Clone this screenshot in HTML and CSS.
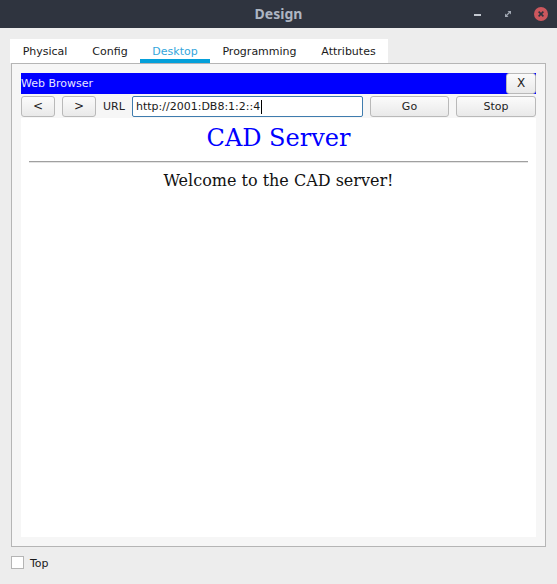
FILE: index.html
```html
<!DOCTYPE html>
<html>
<head>
<meta charset="utf-8">
<title>Design</title>
<link rel="stylesheet" href="styles.css">
</head>
<body>
<div class="window">
  <div class="titlebar">
    <div class="tb-left"></div>
    <div class="tb-title">Design</div>
    <div class="tb-controls">
      <span class="ctl-min"></span>
      <svg class="ctl-max" width="6" height="6" viewBox="0 0 6 6"><polygon points="2.5,0 6,0 6,3.5" fill="#a3aab5"/><polygon points="0,2.5 0,6 3.5,6" fill="#a3aab5"/><line x1="1" y1="5" x2="5" y2="1" stroke="#a3aab5" stroke-width="1.2"/></svg>
      <span class="ctl-close"><svg width="14" height="14" viewBox="0 0 14 14"><circle cx="7" cy="7" r="7" fill="#cc575d"/><path d="M4.6 4.6 L9.4 9.4 M9.4 4.6 L4.6 9.4" stroke="#2f343f" stroke-width="1.6"/></svg></span>
    </div>
  </div>

  <div class="tabs">
    <div class="tab w70">Physical</div>
    <div class="tab w60">Config</div>
    <div class="tab w70 active">Desktop</div>
    <div class="tab w99">Programming</div>
    <div class="tab w79">Attributes</div>
  </div>

  <div class="panel">
    <div class="wb-bar">
      <div class="wb-title">Web Browser</div>
      <div class="btn btn-x">X</div>
    </div>
    <div class="nav-row">
      <div class="btn btn-nav">&lt;</div>
      <div class="btn btn-nav">&gt;</div>
      <div class="url-label">URL</div>
      <div class="url-input"><span class="url-text">http://2001:DB8:1:2::4</span><span class="caret"></span></div>
      <div class="btn btn-go">Go</div>
      <div class="btn btn-stop">Stop</div>
    </div>
    <div class="page">
      <h1 class="page-title">CAD Server</h1>
      <div class="page-rule"></div>
      <p class="page-text">Welcome to the CAD server!</p>
    </div>
  </div>

  <div class="bottom">
    <span class="checkbox"></span>
    <span class="check-label">Top</span>
  </div>
</div>
</body>
</html>
```

FILE: styles.css
```css
html, body {
  margin: 0;
  padding: 0;
}
body {
  width: 557px;
  height: 584px;
  background: #ededed;
  font-family: "DejaVu Sans", sans-serif;
  font-size: 11px;
  color: #1a1a1a;
  overflow: hidden;
}
.window {
  display: flex;
  flex-direction: column;
}
.titlebar {
  height: 28px;
  background: #2f343f;
  display: grid;
  grid-template-columns: 1fr auto 1fr;
  align-items: center;
}
.tb-title {
  font-family: "Noto Sans", sans-serif;
  font-weight: bold;
  font-size: 14px;
  line-height: 28px;
  color: #aeb6c3;
}
.tb-controls {
  display: flex;
  justify-content: flex-end;
  align-items: center;
  padding-right: 9px;
  height: 28px;
}
.ctl-min {
  display: block;
  width: 7px;
  height: 2px;
  background: #c3c8d0;
  margin-top: 1px;
}
.ctl-max {
  display: block;
  margin-left: 24px;
}
.ctl-close {
  display: block;
  width: 14px;
  height: 14px;
  margin-left: 23px;
}
.ctl-close svg { display: block; }

.tabs {
  display: flex;
  align-self: flex-start;
  margin: 11px 0 0 10px;
  background: #ffffff;
  height: 24px;
}
.tab {
  box-sizing: border-box;
  padding-top: 1px;
  line-height: 23px;
  height: 24px;
  text-align: center;
  color: #1a1a1a;
}
.w70 { width: 70px; }
.w60 { width: 60px; }
.w99 { width: 99px; }
.w79 { width: 79px; }
.tab.active {
  color: #33a6dc;
  box-shadow: inset 0 -4px 0 #04a0da;
}

.panel {
  margin-left: 11px;
  width: 535px;
  height: 484px;
  box-sizing: border-box;
  border: 1px solid #b5b5b5;
  background: #f6f6f6;
  padding: 9px;
  display: flex;
  flex-direction: column;
}
.wb-bar {
  height: 21px;
  background: #0000ff;
  display: flex;
}
.wb-title {
  flex: 1;
  line-height: 21px;
  color: #e6e6ff;
}
.btn {
  box-sizing: border-box;
  border: 1px solid #b9b9b9;
  border-radius: 3px;
  background: linear-gradient(#fbfbfb, #e9e9e9);
  text-align: center;
  line-height: 19px;
  height: 21px;
  color: #1e1e1e;
}
.btn-x {
  width: 30px;
  font-size: 12px;
}
.nav-row {
  margin-top: 2px;
  height: 21px;
  display: flex;
  gap: 7px;
}
.btn-nav { width: 34px; font-size: 12px; }
.url-label {
  width: 22px;
  line-height: 21px;
  color: #222;
}
.url-input {
  width: 231px;
  box-sizing: border-box;
  border: 1px solid #3f7cae;
  border-radius: 2px;
  background: #fff;
  padding-left: 3px;
  line-height: 19px;
  display: flex;
  align-items: center;
  color: #1a1a1a;
}
.caret {
  display: block;
  width: 1px;
  height: 14px;
  background: #000;
  margin-left: 1px;
}
.btn-go { width: 79px; }
.btn-stop { width: 80px; }

.page {
  margin-top: 1px;
  flex: 1;
  background: #ffffff;
  font-family: "DejaVu Serif", serif;
  display: flex;
  flex-direction: column;
  padding: 0 8px;
}
.page-title {
  margin: 6px 0 0 0;
  font-size: 24px;
  font-weight: normal;
  line-height: 28px;
  color: #0000ff;
  text-align: center;
}
.page-rule {
  margin-top: 9px;
  height: 1px;
  background: #a0a0a0;
  border-bottom: 1px solid #e4e4e4;
}
.page-text {
  margin: 8px 0 0 0;
  font-size: 16px;
  line-height: 19px;
  color: #111;
  text-align: center;
}

.bottom {
  margin: 9px 0 0 11px;
  display: flex;
  align-items: center;
  height: 13px;
}
.checkbox {
  display: block;
  width: 13px;
  height: 13px;
  box-sizing: border-box;
  border: 1px solid #b5b5b5;
  background: #fff;
}
.check-label {
  margin-left: 6px;
  padding-top: 2px;
  line-height: 13px;
  color: #1a1a1a;
}
```
